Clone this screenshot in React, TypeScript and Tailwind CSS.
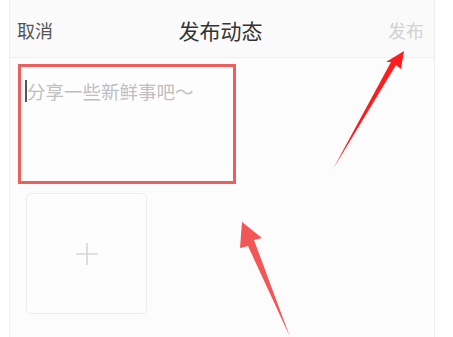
import React from "react";

export default function App() {
  return (
    <div
      className="relative w-[453px] h-[337px] overflow-hidden bg-white"
      style={{ fontFamily: '"Noto Sans CJK SC", "Noto Sans", sans-serif' }}
    >
      <div className="ml-[9px] w-[426px] h-full border-x border-[#efefef] bg-[#fcfcfc] flex flex-col">
        <div className="h-[58px] shrink-0 border-b border-[#efefef] bg-[#fafafa] flex items-center justify-between pl-[7px] pr-[10px] pt-[2px]">
          <span className="text-[18px] leading-none text-[#555555]">取消</span>
          <span className="text-[21px] leading-none text-[#333333] pt-[2px]">发布动态</span>
          <span className="text-[18px] leading-none text-[#d2d2d2]">发布</span>
        </div>
        <div className="flex flex-col pl-[8px] pt-[6px]">
          <div className="w-[218px] h-[120px] border-[3px] border-[#eb5f5f] bg-[#fdfdfd] flex items-start pl-[4px] pt-[13px]">
            <span className="w-[2px] h-[22px] bg-[#555555] shrink-0" />
            <span className="text-[18.5px] leading-[22px] text-[#bfbfbf] whitespace-nowrap">分享一些新鲜事吧～</span>
          </div>
          <div className="ml-[8px] mt-[9px] w-[121px] h-[121px] rounded-[5px] border border-[#ececec] bg-[#fdfdfd] flex items-center justify-center">
            <svg width="24" height="24" viewBox="0 0 24 24">
              <path d="M12 1 V23 M1 12 H23" stroke="#d6d6d6" strokeWidth="1.6" fill="none" />
            </svg>
          </div>
        </div>
      </div>
      <svg className="absolute left-0 top-0 pointer-events-none" width="453" height="337" viewBox="0 0 453 337">
        <polygon points="404,51 401,69 396,65 333,169 391,62 386,62" fill="#ff1c1c" />
        <polygon points="242,222 262,238 254,240 290,337 248,246 240,248" fill="#f25656" />
      </svg>
    </div>
  );
}
